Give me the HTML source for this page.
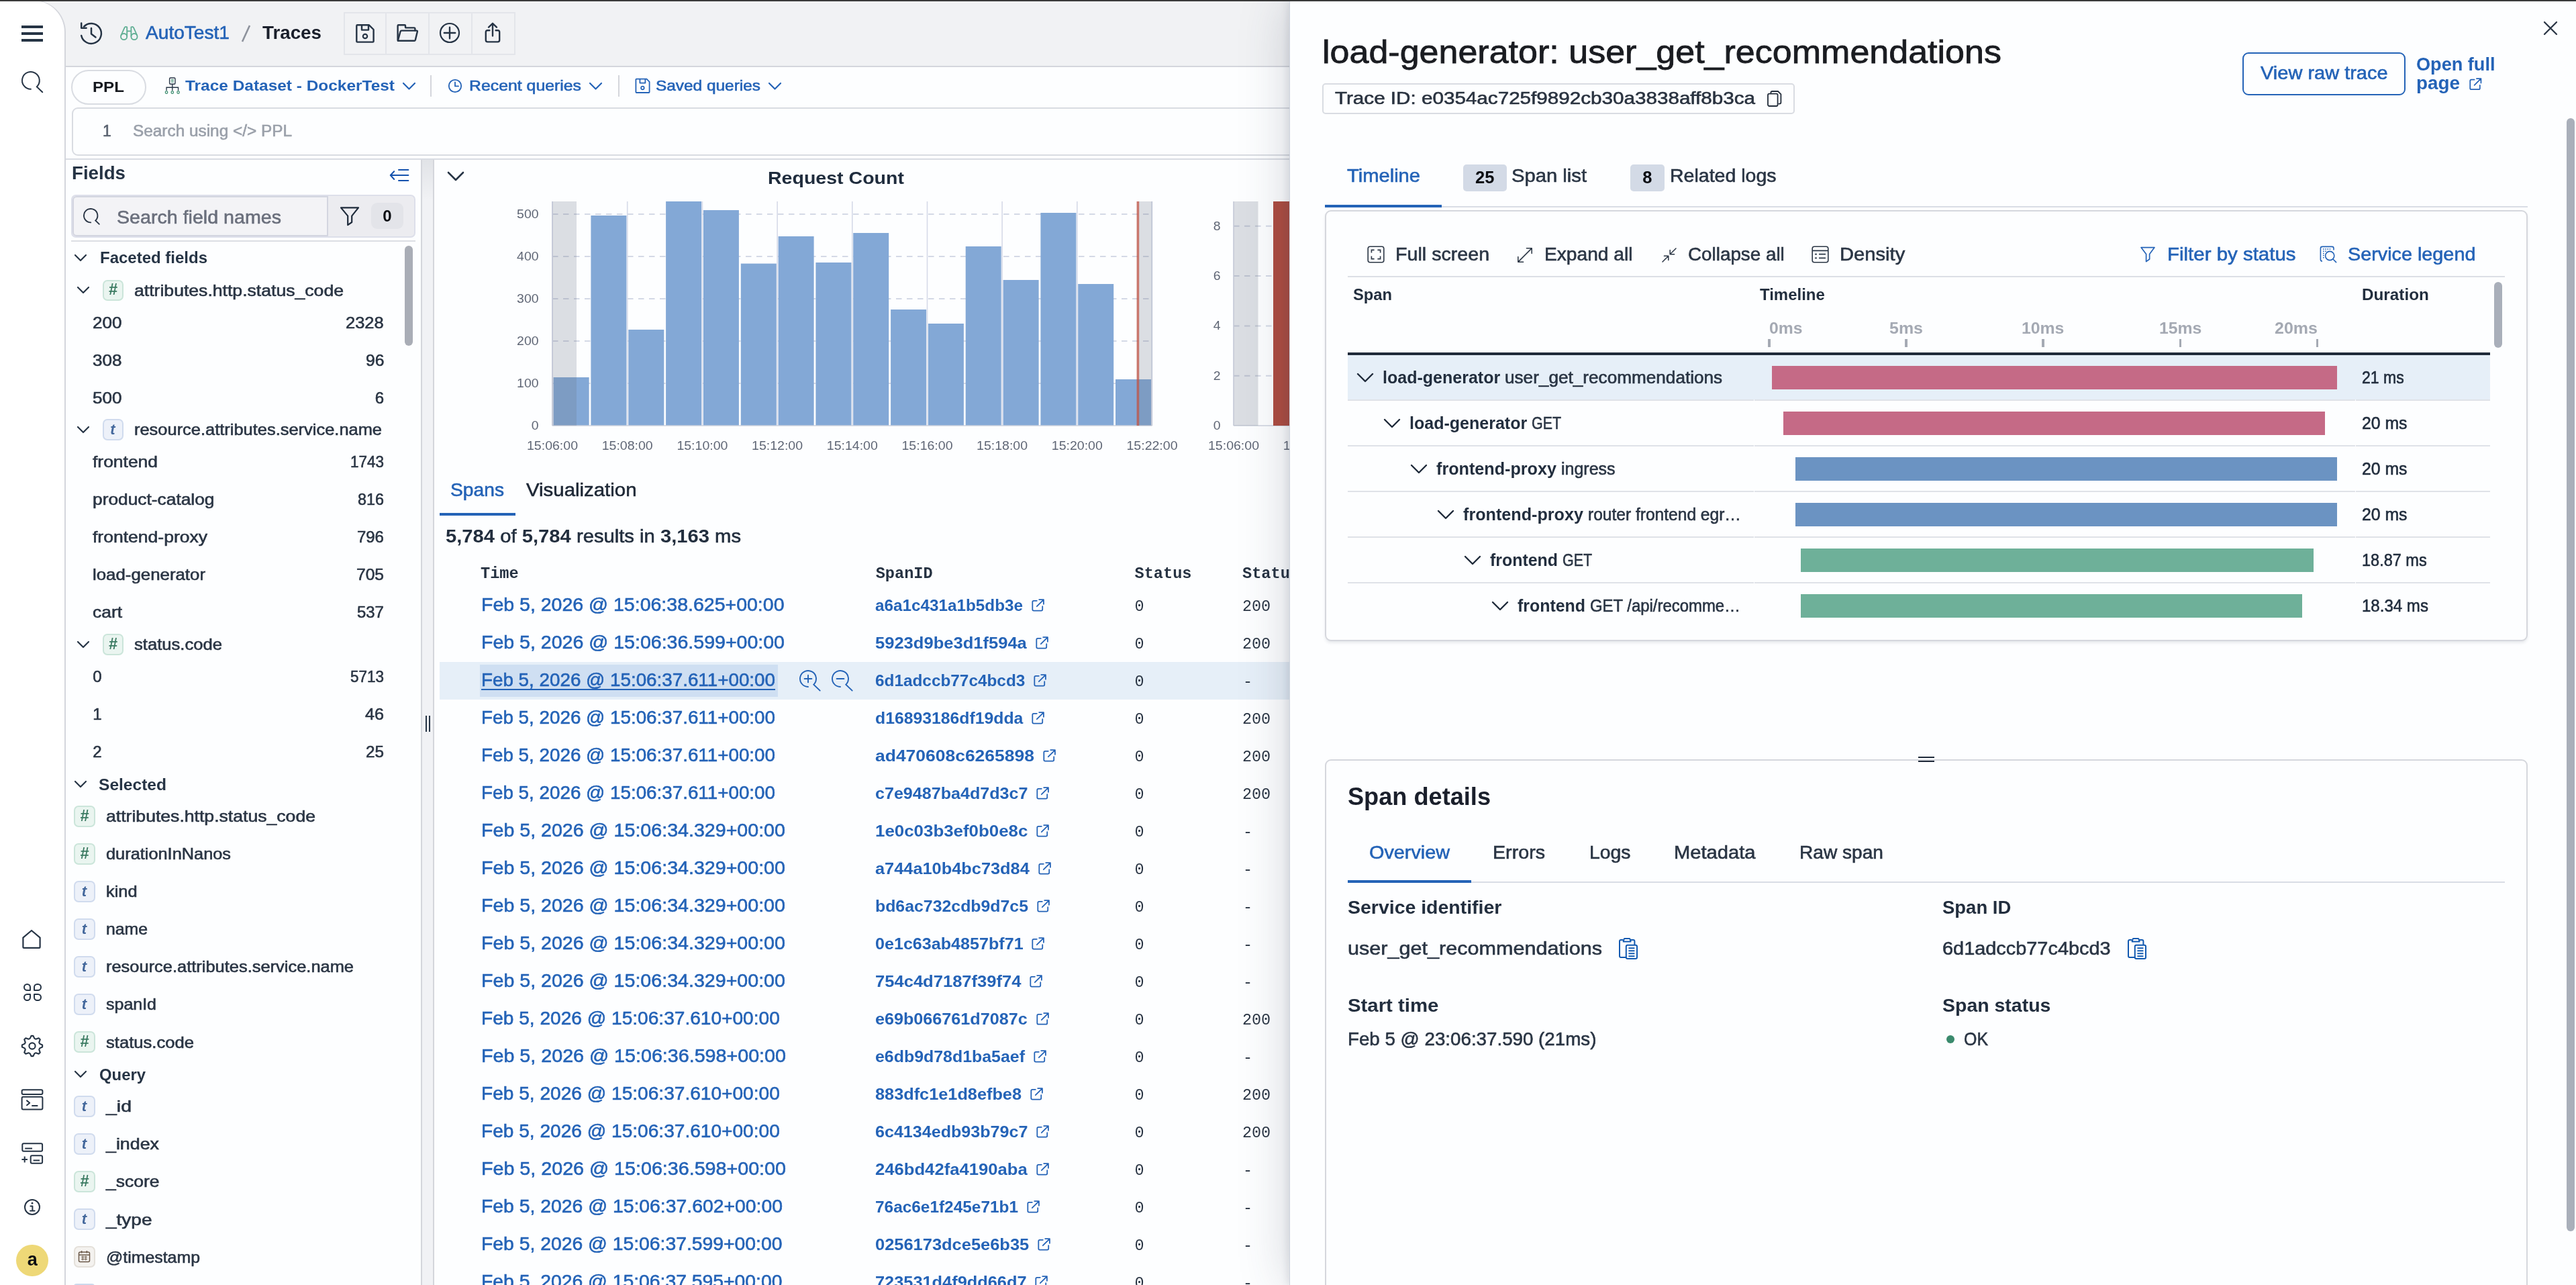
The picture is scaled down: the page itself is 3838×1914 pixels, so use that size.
<!DOCTYPE html>
<html lang="en"><head><meta charset="utf-8"><title>Traces</title><style>
html,body{margin:0;padding:0;}
body{width:3838px;height:1914px;overflow:hidden;position:relative;background:#fdfeff;font-family:"Liberation Sans",sans-serif;}
#app{position:absolute;left:0;top:0;width:3838px;height:1914px;overflow:hidden;will-change:transform;}
.t,.m,.b{position:absolute;}
.t,.m{white-space:nowrap;line-height:1;}
.t{font-family:"Liberation Sans",sans-serif;}
.m{font-family:"Liberation Mono",monospace;}
.r{-webkit-text-stroke:.6px;}
svg{display:block;overflow:visible;}
</style></head>
<body>
<div id="app">
<div class="b" style="left:0px;top:0px;width:3838px;height:1914px;background:#fdfeff;"></div>
<div class="b" style="left:0px;top:0px;width:3838px;height:98px;background:#f1f2f4;"></div>
<div class="b" style="left:96px;top:98px;width:3742px;height:2px;background:#d4d6dc;"></div>
<div class="b" style="left:98px;top:236px;width:3740px;height:2px;background:#d9dce3;"></div>
<div class="b" style="left:0px;top:0px;width:96px;height:1914px;background:#fff;border-right:2px solid #d4d6dc;border-top:1px solid #d4d6dc;border-top-right-radius:48px;"></div>
<div class="b" style="left:0px;top:0px;width:3838px;height:2px;background:#3a3a3a;"></div>
<div class="b" style="left:32px;top:38px;width:32px;height:4px;background:#263445;"></div>
<div class="b" style="left:32px;top:48px;width:32px;height:4px;background:#263445;"></div>
<div class="b" style="left:32px;top:58px;width:32px;height:4px;background:#263445;"></div>
<svg class="b" style="left:30.1px;top:103.9px;" width="47.7" height="47.7" viewBox="0 0 47.7 47.7" fill="none"><path d="M15.90 28.80 A12.90 12.90 0 1 1 24.86 25.18 L33.23 33.23" stroke="#263445" stroke-width="2" stroke-linecap="round" stroke-linejoin="miter"/></svg>
<svg class="b" style="left:116px;top:30px;" width="40" height="40" viewBox="0 0 40 40" fill="none"><path d="M5.2 23 A15 15 0 1 0 9 9.6" stroke="#263445" stroke-width="2.5" stroke-linecap="round"/><path d="M5.2 4.5 V11.8 H12.6" stroke="#263445" stroke-width="2.5" stroke-linecap="round" stroke-linejoin="round"/><path d="M20 12 V20.5 L26.5 25.5" stroke="#263445" stroke-width="2.5" stroke-linecap="round" stroke-linejoin="round"/></svg>
<svg class="b" style="left:178px;top:38px;" width="30" height="24" viewBox="0 0 30 24" fill="none"><circle cx="6.6" cy="16.6" r="4.6" stroke="#5fae93" stroke-width="1.8"/><circle cx="22" cy="16.6" r="4.6" stroke="#5fae93" stroke-width="1.8"/><path d="M2.2 15 L7.6 3.2 Q8.4 1.6 10 2 L11.2 2.4 V16.6" stroke="#5fae93" stroke-width="1.8" stroke-linejoin="round"/><path d="M26.4 15 L21 3.2 Q20.2 1.6 18.6 2 L17.4 2.4 V16.6" stroke="#5fae93" stroke-width="1.8" stroke-linejoin="round"/><path d="M11.2 8.4 H17.4" stroke="#5fae93" stroke-width="1.8"/></svg>
<div class="t r" style="left:217.0px;top:35.3px;font-size:28px;color:#2463b7;transform:scaleX(1.0038);transform-origin:0 0;">AutoTest1</div>
<svg class="b" style="left:356px;top:36px;" width="22" height="28" viewBox="0 0 22 28" fill="none"><path d="M16 2 L5 26" stroke="#8d929c" stroke-width="2.6"/></svg>
<div class="t" style="left:391.0px;top:35.3px;font-size:28px;color:#1a1f2b;font-weight:700;transform:scaleX(0.9916);transform-origin:0 0;">Traces</div>
<div class="b" style="left:512px;top:18px;width:256px;height:64px;border:2px solid #e3e5ea;box-sizing:border-box;"></div>
<div class="b" style="left:574px;top:20px;width:2px;height:60px;background:#e3e5ea;"></div>
<div class="b" style="left:638px;top:20px;width:2px;height:60px;background:#e3e5ea;"></div>
<div class="b" style="left:702px;top:20px;width:2px;height:60px;background:#e3e5ea;"></div>
<svg class="b" style="left:526px;top:32px;" width="36" height="36" viewBox="0 0 36 36" fill="none"><path d="M6.5 5.2 H23.6 L30.6 12 V29.4 Q30.6 30.6 29.4 30.6 H6.5 Q5.3 30.6 5.3 29.4 V6.4 Q5.3 5.2 6.5 5.2 Z" stroke="#263445" stroke-width="2.4" stroke-linejoin="round"/><path d="M13 5.5 V12.6 H23 V5.5" stroke="#263445" stroke-width="2.4" stroke-linejoin="round"/><circle cx="18" cy="22" r="3.2" stroke="#263445" stroke-width="2.2"/></svg>
<svg class="b" style="left:588px;top:32px;" width="38" height="34" viewBox="0 0 38 34" fill="none"><path d="M4.6 27.6 V6.4 Q4.6 5.2 5.8 5.2 H15 Q16 5.2 16 6.2 V8.4 Q16 9.4 17 9.4 H29 Q30.4 9.4 30.4 10.8 V13.4" stroke="#263445" stroke-width="2.4" stroke-linejoin="round" stroke-linecap="round"/><path d="M4.8 28.6 L8.6 14.8 Q9 13.6 10.2 13.6 H32.6 Q34.2 13.6 33.8 15.2 L30.8 27.6 Q30.4 28.8 29.2 28.8 H6 Q4.6 28.8 4.8 28.6 Z" stroke="#263445" stroke-width="2.4" stroke-linejoin="round"/></svg>
<svg class="b" style="left:652px;top:31px;" width="36" height="36" viewBox="0 0 36 36" fill="none"><circle cx="18" cy="18" r="14" stroke="#263445" stroke-width="2.2"/><path d="M18 9.8 V26.2 M9.8 18 H26.2" stroke="#263445" stroke-width="2.4" stroke-linecap="round"/></svg>
<svg class="b" style="left:718px;top:30px;" width="32" height="38" viewBox="0 0 32 38" fill="none"><path d="M11.4 15.2 H8.4 Q5.8 15.2 5.8 17.8 V29.8 Q5.8 32.4 8.4 32.4 H23.6 Q26.2 32.4 26.2 29.8 V17.8 Q26.2 15.2 23.6 15.2 H20.6" stroke="#263445" stroke-width="2.4" stroke-linecap="round"/><path d="M16 23.4 V5.2 M10 10.6 L16 4.8 L22 10.6" stroke="#263445" stroke-width="2.4" stroke-linecap="round" stroke-linejoin="round"/></svg>
<div class="b" style="left:106.4px;top:104.4px;width:111.2px;height:51.3px;border:2px solid #d9dce2;border-radius:26px;box-sizing:border-box;background:#fdfeff;"></div>
<div class="t" style="left:138.4px;top:118.6px;font-size:22.5px;color:#15181e;font-weight:700;transform:scaleX(1.0741);transform-origin:0 0;">PPL</div>
<svg class="b" style="left:245px;top:114.1px;" width="23.6" height="28.2" viewBox="0 0 28 30" preserveAspectRatio="none" fill="none"><rect x="9" y="2" width="10" height="10" rx="1.6" stroke="#263445" stroke-width="1.6"/><path d="M11.6 5.6 H16.4 M11.6 8.4 H16.4" stroke="#3f8f72" stroke-width="1.4"/><path d="M14 12 V22 M3.6 22 V17.4 H24.4 V22" stroke="#263445" stroke-width="1.6"/><circle cx="3.6" cy="25" r="2" stroke="#3f8f72" stroke-width="1.5"/><circle cx="14" cy="25" r="2" stroke="#3f8f72" stroke-width="1.5"/><circle cx="24.4" cy="25" r="2" stroke="#3f8f72" stroke-width="1.5"/></svg>
<div class="t" style="left:276.0px;top:117.0px;font-size:22.5px;color:#2463b7;font-weight:700;transform:scaleX(1.0863);transform-origin:0 0;">Trace Dataset - DockerTest</div>
<svg class="b" style="left:598.5px;top:121.75px;" width="21" height="12.5" viewBox="0 0 21 12.5" fill="none"><path d="M2 2 L10.5 10.5 L19 2" stroke="#2463b7" stroke-width="2.2" stroke-linecap="round" stroke-linejoin="round"/></svg>
<div class="b" style="left:641px;top:112px;width:2px;height:32px;background:#d4d6dc;"></div>
<svg class="b" style="left:666px;top:116px;" width="24" height="24" viewBox="0 0 24 24" fill="none"><circle cx="12" cy="12" r="9.2" stroke="#2463b7" stroke-width="1.8"/><path d="M12 6.4 V12.4 H17" stroke="#2463b7" stroke-width="1.8" stroke-linecap="round" stroke-linejoin="round"/></svg>
<div class="t r" style="left:699.0px;top:117.0px;font-size:22.5px;color:#2463b7;transform:scaleX(1.1035);transform-origin:0 0;">Recent queries</div>
<svg class="b" style="left:877px;top:121.75px;" width="21" height="12.5" viewBox="0 0 21 12.5" fill="none"><path d="M2 2 L10.5 10.5 L19 2" stroke="#2463b7" stroke-width="2.2" stroke-linecap="round" stroke-linejoin="round"/></svg>
<div class="b" style="left:921px;top:112px;width:2px;height:32px;background:#d4d6dc;"></div>
<svg class="b" style="left:945px;top:115px;" width="26" height="26" viewBox="0 0 26 26" fill="none"><path d="M3.4 2.6 H18.4 L22.6 6.8 V22 Q22.6 23 21.6 23 H3.4 Q2.4 23 2.4 22 V3.6 Q2.4 2.6 3.4 2.6 Z" stroke="#2463b7" stroke-width="1.8" stroke-linejoin="round"/><path d="M8.4 3 V8.6 H16.4 V3" stroke="#2463b7" stroke-width="1.8" stroke-linejoin="round"/><circle cx="12.4" cy="16" r="2.3" stroke="#2463b7" stroke-width="1.7"/></svg>
<div class="t r" style="left:977.0px;top:117.0px;font-size:22.5px;color:#2463b7;transform:scaleX(1.0845);transform-origin:0 0;">Saved queries</div>
<svg class="b" style="left:1144px;top:121.75px;" width="21" height="12.5" viewBox="0 0 21 12.5" fill="none"><path d="M2 2 L10.5 10.5 L19 2" stroke="#2463b7" stroke-width="2.2" stroke-linecap="round" stroke-linejoin="round"/></svg>
<div class="b" style="left:107px;top:160px;width:3000px;height:72px;border:2px solid #d9dce2;border-radius:9px;box-sizing:border-box;background:#fdfeff;"></div>
<div class="t r" style="left:153.0px;top:183.5px;font-size:23px;color:#59616f;">1</div>
<div class="t r" style="left:198.0px;top:183.5px;font-size:23px;color:#9aa0aa;transform:scaleX(1.0592);transform-origin:0 0;">Search using &lt;/&gt; PPL</div>
<div class="b" style="left:627px;top:238px;width:2px;height:1676px;background:#d4d6dc;"></div>
<div class="b" style="left:629px;top:238px;width:16px;height:1676px;background:linear-gradient(#e1e3e7,#f1f2f5 60px);"></div>
<div class="b" style="left:645px;top:238px;width:2px;height:1676px;background:#d4d6dc;"></div>
<div class="b" style="left:634px;top:1066px;width:2px;height:24px;background:#263445;"></div>
<div class="b" style="left:639px;top:1066px;width:2px;height:24px;background:#263445;"></div>
<div class="t" style="left:107.0px;top:244.3px;font-size:28px;color:#263445;font-weight:700;transform:scaleX(0.9887);transform-origin:0 0;">Fields</div>
<svg class="b" style="left:578px;top:248px;" width="34" height="26" viewBox="0 0 34 26" fill="none"><path d="M16 4.9 H30.4 M4 13 H30.4 M16 21 H30.4" stroke="#1452ad" stroke-width="2" stroke-linecap="round"/><path d="M9.2 7.2 L3.8 13 L9.2 19" stroke="#1452ad" stroke-width="2" stroke-linecap="round" stroke-linejoin="round"/></svg>
<div class="b" style="left:106px;top:290px;width:513px;height:64px;background:#ececf0;border:2px solid #dddfea;border-radius:7px;box-sizing:border-box;"></div>
<div class="b" style="left:108px;top:292px;width:381px;height:60px;background:#f3f3f6;border:2px solid #d3d5e0;border-right:2px solid #d3d5e0;border-radius:6px 0 0 6px;box-sizing:border-box;"></div>
<svg class="b" style="left:122.2px;top:307.8px;" width="39.6" height="39.6" viewBox="0 0 39.6 39.6" fill="none"><path d="M13.20 23.40 A10.20 10.20 0 1 1 20.29 20.54 L25.82 25.82" stroke="#2b3646" stroke-width="1.9" stroke-linecap="round" stroke-linejoin="miter"/></svg>
<div class="t r" style="left:174.0px;top:310.3px;font-size:28px;color:#6a6f7c;transform:scaleX(1.0222);transform-origin:0 0;">Search field names</div>
<svg class="b" style="left:504px;top:305px;" width="34" height="34" viewBox="0 0 34 34" fill="none"><path d="M4 4.4 H30 L20.2 16.6 V26 L14.2 30.2 V16.6 Z" stroke="#1f2b3b" stroke-width="2.2" stroke-linejoin="round"/></svg>
<div class="b" style="left:553px;top:302px;width:48px;height:39px;background:#e3e4e9;border-radius:9px;"></div>
<div class="t" style="left:570.3px;top:310.2px;font-size:24px;color:#0b0d12;font-weight:700;">0</div>
<div class="b" style="left:106px;top:358px;width:513px;height:2px;background:#dcdee4;"></div>
<div class="b" style="left:603px;top:366px;width:12px;height:149px;background:#a9adb6;border-radius:6px;"></div>
<svg class="b" style="left:110px;top:378px;" width="20" height="12" viewBox="0 0 20 12" fill="none"><path d="M2 2 L10 10 L18 2" stroke="#263445" stroke-width="2.2" stroke-linecap="round" stroke-linejoin="round"/></svg>
<div class="t" style="left:148.6px;top:372.3px;font-size:24px;color:#263445;font-weight:700;transform:scaleX(0.9997);transform-origin:0 0;">Faceted fields</div>
<svg class="b" style="left:113.6px;top:426px;" width="20" height="12" viewBox="0 0 20 12" fill="none"><path d="M2 2 L10 10 L18 2" stroke="#263445" stroke-width="2.2" stroke-linecap="round" stroke-linejoin="round"/></svg>
<div class="b" style="left:152.5px;top:416.5px;width:31.5px;height:31.5px;background:#eaf5f0;border:2px solid #cbe5da;border-radius:7px;box-sizing:border-box;"></div>
<div class="t" style="left:161.8px;top:420.3px;font-size:23.5px;color:#3a7a61;font-weight:700;font-style:italic;">#</div>
<div class="t r" style="left:200.3px;top:420.5px;font-size:24px;color:#2a3544;transform:scaleX(1.1083);transform-origin:0 0;">attributes.http.status_code</div>
<div class="t r" style="left:138.3px;top:468.9px;font-size:24px;color:#2a3544;transform:scaleX(1.0863);transform-origin:0 0;">200</div>
<div class="t r" style="left:515.3px;top:468.9px;font-size:24px;color:#2a3544;transform:scaleX(1.0620);transform-origin:0 0;">2328</div>
<div class="t r" style="left:138.3px;top:524.9px;font-size:24px;color:#2a3544;transform:scaleX(1.0863);transform-origin:0 0;">308</div>
<div class="t r" style="left:544.6px;top:524.9px;font-size:24px;color:#2a3544;transform:scaleX(1.0264);transform-origin:0 0;">96</div>
<div class="t r" style="left:138.3px;top:580.9px;font-size:24px;color:#2a3544;transform:scaleX(1.0863);transform-origin:0 0;">500</div>
<div class="t r" style="left:558.7px;top:580.9px;font-size:24px;color:#2a3544;">6</div>
<svg class="b" style="left:113.6px;top:633.5px;" width="20" height="12" viewBox="0 0 20 12" fill="none"><path d="M2 2 L10 10 L18 2" stroke="#263445" stroke-width="2.2" stroke-linecap="round" stroke-linejoin="round"/></svg>
<div class="b" style="left:152.5px;top:624px;width:31.5px;height:31.5px;background:#edf1f9;border:2px solid #d0dbee;border-radius:7px;box-sizing:border-box;"></div>
<div class="t" style="left:164.3px;top:628.5px;font-size:22px;color:#44689c;font-weight:700;font-style:italic;">t</div>
<div class="t r" style="left:200.3px;top:628.0px;font-size:24px;color:#2a3544;transform:scaleX(1.0599);transform-origin:0 0;">resource.attributes.service.name</div>
<div class="t r" style="left:138.3px;top:675.9px;font-size:24px;color:#2a3544;transform:scaleX(1.1014);transform-origin:0 0;">frontend</div>
<div class="t r" style="left:522.0px;top:675.9px;font-size:24px;color:#2a3544;transform:scaleX(0.9365);transform-origin:0 0;">1743</div>
<div class="t r" style="left:138.3px;top:731.9px;font-size:24px;color:#2a3544;transform:scaleX(1.0971);transform-origin:0 0;">product-catalog</div>
<div class="t r" style="left:533.0px;top:731.9px;font-size:24px;color:#2a3544;transform:scaleX(0.9739);transform-origin:0 0;">816</div>
<div class="t r" style="left:138.3px;top:788.4px;font-size:24px;color:#2a3544;transform:scaleX(1.1050);transform-origin:0 0;">frontend-proxy</div>
<div class="t r" style="left:532.1px;top:788.4px;font-size:24px;color:#2a3544;transform:scaleX(0.9964);transform-origin:0 0;">796</div>
<div class="t r" style="left:138.3px;top:844.4px;font-size:24px;color:#2a3544;transform:scaleX(1.0762);transform-origin:0 0;">load-generator</div>
<div class="t r" style="left:531.0px;top:844.4px;font-size:24px;color:#2a3544;transform:scaleX(1.0239);transform-origin:0 0;">705</div>
<div class="t r" style="left:138.3px;top:900.4px;font-size:24px;color:#2a3544;transform:scaleX(1.0998);transform-origin:0 0;">cart</div>
<div class="t r" style="left:532.1px;top:900.4px;font-size:24px;color:#2a3544;transform:scaleX(0.9964);transform-origin:0 0;">537</div>
<svg class="b" style="left:113.6px;top:953.5px;" width="20" height="12" viewBox="0 0 20 12" fill="none"><path d="M2 2 L10 10 L18 2" stroke="#263445" stroke-width="2.2" stroke-linecap="round" stroke-linejoin="round"/></svg>
<div class="b" style="left:152.5px;top:944px;width:31.5px;height:31.5px;background:#eaf5f0;border:2px solid #cbe5da;border-radius:7px;box-sizing:border-box;"></div>
<div class="t" style="left:161.8px;top:947.8px;font-size:23.5px;color:#3a7a61;font-weight:700;font-style:italic;">#</div>
<div class="t r" style="left:200.3px;top:948.0px;font-size:24px;color:#2a3544;transform:scaleX(1.0673);transform-origin:0 0;">status.code</div>
<div class="t r" style="left:138.3px;top:996.4px;font-size:24px;color:#2a3544;">0</div>
<div class="t r" style="left:522.0px;top:996.4px;font-size:24px;color:#2a3544;transform:scaleX(0.9365);transform-origin:0 0;">5713</div>
<div class="t r" style="left:138.3px;top:1052.4px;font-size:24px;color:#2a3544;">1</div>
<div class="t r" style="left:544.0px;top:1052.4px;font-size:24px;color:#2a3544;transform:scaleX(1.0489);transform-origin:0 0;">46</div>
<div class="t r" style="left:138.3px;top:1108.4px;font-size:24px;color:#2a3544;">2</div>
<div class="t r" style="left:545.0px;top:1108.4px;font-size:24px;color:#2a3544;transform:scaleX(1.0114);transform-origin:0 0;">25</div>
<svg class="b" style="left:110px;top:1162px;" width="20" height="12" viewBox="0 0 20 12" fill="none"><path d="M2 2 L10 10 L18 2" stroke="#263445" stroke-width="2.2" stroke-linecap="round" stroke-linejoin="round"/></svg>
<div class="t" style="left:147.4px;top:1156.5px;font-size:24px;color:#263445;font-weight:700;transform:scaleX(1.0231);transform-origin:0 0;">Selected</div>
<div class="b" style="left:110px;top:1200px;width:31.5px;height:31.5px;background:#eaf5f0;border:2px solid #cbe5da;border-radius:7px;box-sizing:border-box;"></div>
<div class="t" style="left:119.3px;top:1203.8px;font-size:23.5px;color:#3a7a61;font-weight:700;font-style:italic;">#</div>
<div class="t r" style="left:158.0px;top:1204.2px;font-size:24px;color:#2a3544;transform:scaleX(1.1083);transform-origin:0 0;">attributes.http.status_code</div>
<div class="b" style="left:110px;top:1256.05px;width:31.5px;height:31.5px;background:#eaf5f0;border:2px solid #cbe5da;border-radius:7px;box-sizing:border-box;"></div>
<div class="t" style="left:119.3px;top:1259.9px;font-size:23.5px;color:#3a7a61;font-weight:700;font-style:italic;">#</div>
<div class="t r" style="left:158.0px;top:1260.2px;font-size:24px;color:#2a3544;transform:scaleX(1.0561);transform-origin:0 0;">durationInNanos</div>
<div class="b" style="left:110px;top:1312.1px;width:31.5px;height:31.5px;background:#edf1f9;border:2px solid #d0dbee;border-radius:7px;box-sizing:border-box;"></div>
<div class="t" style="left:121.8px;top:1316.6px;font-size:22px;color:#44689c;font-weight:700;font-style:italic;">t</div>
<div class="t r" style="left:158.0px;top:1316.3px;font-size:24px;color:#2a3544;transform:scaleX(1.0562);transform-origin:0 0;">kind</div>
<div class="b" style="left:110px;top:1368.15px;width:31.5px;height:31.5px;background:#edf1f9;border:2px solid #d0dbee;border-radius:7px;box-sizing:border-box;"></div>
<div class="t" style="left:121.8px;top:1372.6px;font-size:22px;color:#44689c;font-weight:700;font-style:italic;">t</div>
<div class="t r" style="left:158.0px;top:1372.3px;font-size:24px;color:#2a3544;transform:scaleX(1.0327);transform-origin:0 0;">name</div>
<div class="b" style="left:110px;top:1424.2px;width:31.5px;height:31.5px;background:#edf1f9;border:2px solid #d0dbee;border-radius:7px;box-sizing:border-box;"></div>
<div class="t" style="left:121.8px;top:1428.7px;font-size:22px;color:#44689c;font-weight:700;font-style:italic;">t</div>
<div class="t r" style="left:158.0px;top:1428.4px;font-size:24px;color:#2a3544;transform:scaleX(1.0599);transform-origin:0 0;">resource.attributes.service.name</div>
<div class="b" style="left:110px;top:1480.25px;width:31.5px;height:31.5px;background:#edf1f9;border:2px solid #d0dbee;border-radius:7px;box-sizing:border-box;"></div>
<div class="t" style="left:121.8px;top:1484.7px;font-size:22px;color:#44689c;font-weight:700;font-style:italic;">t</div>
<div class="t r" style="left:158.0px;top:1484.4px;font-size:24px;color:#2a3544;transform:scaleX(1.0408);transform-origin:0 0;">spanId</div>
<div class="b" style="left:110px;top:1536.3px;width:31.5px;height:31.5px;background:#eaf5f0;border:2px solid #cbe5da;border-radius:7px;box-sizing:border-box;"></div>
<div class="t" style="left:119.3px;top:1540.1px;font-size:23.5px;color:#3a7a61;font-weight:700;font-style:italic;">#</div>
<div class="t r" style="left:158.0px;top:1540.5px;font-size:24px;color:#2a3544;transform:scaleX(1.0673);transform-origin:0 0;">status.code</div>
<svg class="b" style="left:110px;top:1594px;" width="20" height="12" viewBox="0 0 20 12" fill="none"><path d="M2 2 L10 10 L18 2" stroke="#263445" stroke-width="2.2" stroke-linecap="round" stroke-linejoin="round"/></svg>
<div class="t" style="left:147.6px;top:1588.5px;font-size:24px;color:#263445;font-weight:700;transform:scaleX(0.9948);transform-origin:0 0;">Query</div>
<div class="b" style="left:110px;top:1632px;width:31.5px;height:31.5px;background:#edf1f9;border:2px solid #d0dbee;border-radius:7px;box-sizing:border-box;"></div>
<div class="t" style="left:121.8px;top:1636.5px;font-size:22px;color:#44689c;font-weight:700;font-style:italic;">t</div>
<div class="t r" style="left:158.0px;top:1636.2px;font-size:24px;color:#2a3544;transform:scaleX(1.1865);transform-origin:0 0;">_id</div>
<div class="b" style="left:110px;top:1688.1px;width:31.5px;height:31.5px;background:#edf1f9;border:2px solid #d0dbee;border-radius:7px;box-sizing:border-box;"></div>
<div class="t" style="left:121.8px;top:1692.6px;font-size:22px;color:#44689c;font-weight:700;font-style:italic;">t</div>
<div class="t r" style="left:158.0px;top:1692.3px;font-size:24px;color:#2a3544;transform:scaleX(1.1170);transform-origin:0 0;">_index</div>
<div class="b" style="left:110px;top:1744.2px;width:31.5px;height:31.5px;background:#eaf5f0;border:2px solid #cbe5da;border-radius:7px;box-sizing:border-box;"></div>
<div class="t" style="left:119.3px;top:1748.0px;font-size:23.5px;color:#3a7a61;font-weight:700;font-style:italic;">#</div>
<div class="t r" style="left:158.0px;top:1748.4px;font-size:24px;color:#2a3544;transform:scaleX(1.1036);transform-origin:0 0;">_score</div>
<div class="b" style="left:110px;top:1800.3px;width:31.5px;height:31.5px;background:#edf1f9;border:2px solid #d0dbee;border-radius:7px;box-sizing:border-box;"></div>
<div class="t" style="left:121.8px;top:1804.8px;font-size:22px;color:#44689c;font-weight:700;font-style:italic;">t</div>
<div class="t r" style="left:158.0px;top:1804.5px;font-size:24px;color:#2a3544;transform:scaleX(1.1667);transform-origin:0 0;">_type</div>
<div class="b" style="left:110px;top:1856.4px;width:31.5px;height:31.5px;background:#f4f2ef;border:2px solid #e4e0da;border-radius:7px;box-sizing:border-box;"></div>
<svg class="b" style="left:116px;top:1862.4px;" width="19" height="19" viewBox="0 0 19 19" fill="none"><rect x="1.5" y="3" width="16" height="14.5" rx="2" stroke="#6b5a4a" stroke-width="1.5"/><path d="M1.5 7.2 H17.5 M5.6 1 V4.4 M13.4 1 V4.4" stroke="#6b5a4a" stroke-width="1.5"/><path d="M5 10.2 H14 M5 13.4 H14 M7.2 8.6 V15.4 M11.8 8.6 V15.4" stroke="#6b5a4a" stroke-width="1"/></svg>
<div class="t r" style="left:158.0px;top:1860.6px;font-size:24px;color:#2a3544;transform:scaleX(1.0366);transform-origin:0 0;">@timestamp</div>
<div class="b" style="left:110px;top:1912px;width:31px;height:4px;background:#e9eff8;border:2px solid #cbd8ec;border-radius:7px 7px 0 0;box-sizing:border-box;"></div>
<svg class="b" style="left:30px;top:1382px;" width="34" height="34" viewBox="0 0 34 34" fill="none"><path d="M4.4 14.6 L17 4 L29.6 14.6 V28.4 Q29.6 29.8 28.2 29.8 H5.8 Q4.4 29.8 4.4 28.4 Z" stroke="#263445" stroke-width="2.2" stroke-linejoin="round"/></svg>
<div class="b" style="left:34.5px;top:1464.5px;width:11.6px;height:11.6px;border:2px solid #263445;border-radius:50% 50% 12% 50%;box-sizing:border-box;"></div>
<div class="b" style="left:50.4px;top:1464.5px;width:11.6px;height:11.6px;border:2px solid #263445;border-radius:50% 50% 50% 12%;box-sizing:border-box;"></div>
<div class="b" style="left:34.5px;top:1479.6px;width:11.6px;height:11.6px;border:2px solid #263445;border-radius:50% 12% 50% 50%;box-sizing:border-box;"></div>
<div class="b" style="left:50.4px;top:1479.6px;width:11.6px;height:11.6px;border:2px solid #263445;border-radius:12% 50% 50% 50%;box-sizing:border-box;"></div>
<svg class="b" style="left:31px;top:1541px;" width="34" height="34" viewBox="0 0 34 34" fill="none"><path d="M15.51 1.87 L18.49 1.87 L20.37 5.90 L22.47 6.77 L26.64 5.25 L28.75 7.36 L27.23 11.53 L28.10 13.63 L32.13 15.51 L32.13 18.49 L28.10 20.37 L27.23 22.47 L28.75 26.64 L26.64 28.75 L22.47 27.23 L20.37 28.10 L18.49 32.13 L15.51 32.13 L13.63 28.10 L11.53 27.23 L7.36 28.75 L5.25 26.64 L6.77 22.47 L5.90 20.37 L1.87 18.49 L1.87 15.51 L5.90 13.63 L6.77 11.53 L5.25 7.36 L7.36 5.25 L11.53 6.77 L13.63 5.90 Z" stroke="#263445" stroke-width="2.1" stroke-linejoin="round"/><circle cx="17" cy="17" r="4.6" stroke="#263445" stroke-width="2.1"/></svg>
<svg class="b" style="left:30px;top:1621px;" width="36" height="34" viewBox="0 0 36 34" fill="none"><rect x="2.6" y="2.2" width="30.8" height="6.8" rx="2" stroke="#263445" stroke-width="2"/><rect x="2.6" y="12.8" width="30.8" height="18.8" rx="2" stroke="#263445" stroke-width="2"/><path d="M10 18.4 L14.2 21.8 L10 25.2 M18 26 H25.6" stroke="#263445" stroke-width="2" stroke-linecap="round" stroke-linejoin="round"/></svg>
<svg class="b" style="left:30px;top:1700px;" width="36" height="36" viewBox="0 0 36 36" fill="none"><rect x="3.3" y="3.3" width="29.8" height="11.4" rx="2" stroke="#263445" stroke-width="2"/><path d="M7.2 10.6 H18" stroke="#263445" stroke-width="2"/><rect x="15.7" y="21.3" width="17.4" height="11.4" rx="2" stroke="#263445" stroke-width="2"/><path d="M19.6 28.4 H29" stroke="#263445" stroke-width="2"/><path d="M2.4 27 H11 M6.7 22.6 V31.4" stroke="#263445" stroke-width="2"/></svg>
<svg class="b" style="left:34px;top:1784px;" width="28" height="28" viewBox="0 0 28 28" fill="none"><circle cx="14" cy="14" r="11" stroke="#263445" stroke-width="2"/><path d="M11.4 12.4 H14.4 V19.4 M11 19.6 H17.6" stroke="#263445" stroke-width="2" stroke-linecap="round" stroke-linejoin="round"/><circle cx="14" cy="8.2" r="1.4" fill="#263445"/></svg>
<div class="b" style="left:24.2px;top:1853.8px;width:47.7px;height:47.7px;background:#eed877;border-radius:50%;"></div>
<div class="t" style="left:40.7px;top:1862.6px;font-size:27px;color:#0b0d12;font-weight:700;">a</div>
<svg class="b" style="left:666px;top:254.5px;" width="26" height="15" viewBox="0 0 26 15" fill="none"><path d="M2 2 L13 13 L24 2" stroke="#263445" stroke-width="2.6" stroke-linecap="round" stroke-linejoin="round"/></svg>
<div class="t" style="left:1143.8px;top:251.8px;font-size:26px;color:#1f2c3d;font-weight:700;transform:scaleX(1.0980);transform-origin:0 0;">Request Count</div>
<svg class="b" style="left:0;top:0;font-family:'Liberation Sans',sans-serif;" width="2000" height="700" viewBox="0 0 2000 700"><path d="M823.0 318.9 H1716.5" stroke="#d4d9e6" stroke-width="2" stroke-dasharray="8.5 7.5"/><path d="M823.0 381.9 H1716.5" stroke="#d4d9e6" stroke-width="2" stroke-dasharray="8.5 7.5"/><path d="M823.0 444.9 H1716.5" stroke="#d4d9e6" stroke-width="2" stroke-dasharray="8.5 7.5"/><path d="M823.0 507.9 H1716.5" stroke="#d4d9e6" stroke-width="2" stroke-dasharray="8.5 7.5"/><path d="M823.0 570.9 H1716.5" stroke="#d4d9e6" stroke-width="2" stroke-dasharray="8.5 7.5"/><path d="M823.0 300.0 V634.0" stroke="#d6dae8" stroke-width="1.6"/><path d="M934.7 300.0 V634.0" stroke="#d6dae8" stroke-width="1.6"/><path d="M1046.4 300.0 V634.0" stroke="#d6dae8" stroke-width="1.6"/><path d="M1158.1 300.0 V634.0" stroke="#d6dae8" stroke-width="1.6"/><path d="M1269.8 300.0 V634.0" stroke="#d6dae8" stroke-width="1.6"/><path d="M1381.5 300.0 V634.0" stroke="#d6dae8" stroke-width="1.6"/><path d="M1493.1 300.0 V634.0" stroke="#d6dae8" stroke-width="1.6"/><path d="M1604.8 300.0 V634.0" stroke="#d6dae8" stroke-width="1.6"/><path d="M1716.5 300.0 V634.0" stroke="#d6dae8" stroke-width="1.6"/><rect x="824.6" y="562.0" width="53" height="72.0" fill="#83a8d6"/><rect x="880.4" y="321.0" width="53" height="313.0" fill="#83a8d6"/><rect x="936.3" y="491.0" width="53" height="143.0" fill="#83a8d6"/><rect x="992.1" y="300.0" width="53" height="334.0" fill="#83a8d6"/><rect x="1047.9" y="313.0" width="53" height="321.0" fill="#83a8d6"/><rect x="1103.8" y="392.6" width="53" height="241.4" fill="#83a8d6"/><rect x="1159.6" y="352.0" width="53" height="282.0" fill="#83a8d6"/><rect x="1215.4" y="391.0" width="53" height="243.0" fill="#83a8d6"/><rect x="1271.2" y="347.0" width="53" height="287.0" fill="#83a8d6"/><rect x="1327.1" y="461.0" width="53" height="173.0" fill="#83a8d6"/><rect x="1382.9" y="482.0" width="53" height="152.0" fill="#83a8d6"/><rect x="1438.7" y="367.0" width="53" height="267.0" fill="#83a8d6"/><rect x="1494.6" y="417.0" width="53" height="217.0" fill="#83a8d6"/><rect x="1550.4" y="317.0" width="53" height="317.0" fill="#83a8d6"/><rect x="1606.2" y="423.0" width="53" height="211.0" fill="#83a8d6"/><rect x="1662.0" y="565.0" width="53" height="69.0" fill="#83a8d6"/><path d="M823.0 634.0 H1716.5" stroke="#cdd2de" stroke-width="1.6"/><rect x="823" y="300" width="36" height="334" fill="#6c7686" fill-opacity="0.23"/><rect x="1697" y="300" width="19.5" height="334" fill="#6c7686" fill-opacity="0.23"/><path d="M823 300 V634 M1716 300 V634" stroke="#c4c9d6" stroke-width="1.6"/><rect x="1693.6" y="300" width="3.6" height="334" fill="#bd5548" fill-opacity="0.8"/><text x="802.5" y="324.8" text-anchor="end" font-size="18.5" fill="#5f6675" textLength="32.4" lengthAdjust="spacingAndGlyphs">500</text><text x="802.5" y="387.8" text-anchor="end" font-size="18.5" fill="#5f6675" textLength="32.4" lengthAdjust="spacingAndGlyphs">400</text><text x="802.5" y="450.8" text-anchor="end" font-size="18.5" fill="#5f6675" textLength="32.4" lengthAdjust="spacingAndGlyphs">300</text><text x="802.5" y="513.8" text-anchor="end" font-size="18.5" fill="#5f6675" textLength="32.4" lengthAdjust="spacingAndGlyphs">200</text><text x="802.5" y="576.8" text-anchor="end" font-size="18.5" fill="#5f6675" textLength="32.4" lengthAdjust="spacingAndGlyphs">100</text><text x="802.5" y="639.8" text-anchor="end" font-size="18.5" fill="#5f6675" textLength="10.8" lengthAdjust="spacingAndGlyphs">0</text><text x="823.0" y="669.6" text-anchor="middle" font-size="18.5" fill="#5f6675" textLength="76" lengthAdjust="spacingAndGlyphs">15:06:00</text><text x="934.7" y="669.6" text-anchor="middle" font-size="18.5" fill="#5f6675" textLength="76" lengthAdjust="spacingAndGlyphs">15:08:00</text><text x="1046.4" y="669.6" text-anchor="middle" font-size="18.5" fill="#5f6675" textLength="76" lengthAdjust="spacingAndGlyphs">15:10:00</text><text x="1158.1" y="669.6" text-anchor="middle" font-size="18.5" fill="#5f6675" textLength="76" lengthAdjust="spacingAndGlyphs">15:12:00</text><text x="1269.8" y="669.6" text-anchor="middle" font-size="18.5" fill="#5f6675" textLength="76" lengthAdjust="spacingAndGlyphs">15:14:00</text><text x="1381.5" y="669.6" text-anchor="middle" font-size="18.5" fill="#5f6675" textLength="76" lengthAdjust="spacingAndGlyphs">15:16:00</text><text x="1493.1" y="669.6" text-anchor="middle" font-size="18.5" fill="#5f6675" textLength="76" lengthAdjust="spacingAndGlyphs">15:18:00</text><text x="1604.8" y="669.6" text-anchor="middle" font-size="18.5" fill="#5f6675" textLength="76" lengthAdjust="spacingAndGlyphs">15:20:00</text><text x="1716.5" y="669.6" text-anchor="middle" font-size="18.5" fill="#5f6675" textLength="76" lengthAdjust="spacingAndGlyphs">15:22:00</text><path d="M1838 336.8 H1930" stroke="#d4d9e6" stroke-width="2" stroke-dasharray="8.5 7.5"/><path d="M1838 411.1 H1930" stroke="#d4d9e6" stroke-width="2" stroke-dasharray="8.5 7.5"/><path d="M1838 485.4 H1930" stroke="#d4d9e6" stroke-width="2" stroke-dasharray="8.5 7.5"/><path d="M1838 559.7 H1930" stroke="#d4d9e6" stroke-width="2" stroke-dasharray="8.5 7.5"/><text x="1818.5" y="342.7" text-anchor="end" font-size="18.5" fill="#5f6675" textLength="10.8" lengthAdjust="spacingAndGlyphs">8</text><text x="1818.5" y="417.0" text-anchor="end" font-size="18.5" fill="#5f6675" textLength="10.8" lengthAdjust="spacingAndGlyphs">6</text><text x="1818.5" y="491.3" text-anchor="end" font-size="18.5" fill="#5f6675" textLength="10.8" lengthAdjust="spacingAndGlyphs">4</text><text x="1818.5" y="565.6" text-anchor="end" font-size="18.5" fill="#5f6675" textLength="10.8" lengthAdjust="spacingAndGlyphs">2</text><text x="1818.5" y="639.9" text-anchor="end" font-size="18.5" fill="#5f6675" textLength="10.8" lengthAdjust="spacingAndGlyphs">0</text><path d="M1838 634 H1930" stroke="#cdd2de" stroke-width="1.6"/><rect x="1838" y="300" width="36.5" height="334" fill="#6c7686" fill-opacity="0.23"/><path d="M1838 300 V634" stroke="#c4c9d6" stroke-width="1.6"/><rect x="1897" y="300" width="40" height="334" fill="#ae4c40"/><text x="1838" y="669.6" text-anchor="middle" font-size="18.5" fill="#5f6675" textLength="76" lengthAdjust="spacingAndGlyphs">15:06:00</text><text x="1949.7" y="669.6" text-anchor="middle" font-size="18.5" fill="#5f6675" textLength="76" lengthAdjust="spacingAndGlyphs">15:08:00</text></svg>
<div class="t r" style="left:671.0px;top:716.3px;font-size:28px;color:#2463b7;transform:scaleX(1.0076);transform-origin:0 0;">Spans</div>
<div class="t r" style="left:784.0px;top:716.3px;font-size:28px;color:#1d2735;transform:scaleX(1.0498);transform-origin:0 0;">Visualization</div>
<div class="b" style="left:655px;top:764px;width:113px;height:4px;background:#2463b7;"></div>
<div class="t" style="left:663.5px;top:785.3px;font-size:28px;color:#222e3e;transform:scaleX(1.0431);transform-origin:0 0;"><span style="font-weight:700;">5,784</span><span style="-webkit-text-stroke:.6px;"> of </span><span style="font-weight:700;">5,784</span><span style="-webkit-text-stroke:.6px;"> results in </span><span style="font-weight:700;">3,163</span><span style="-webkit-text-stroke:.6px;"> ms</span></div>
<div class="m" style="left:716.0px;top:842.6px;font-size:23.6px;color:#263242;font-weight:700;">Time</div>
<div class="m" style="left:1304.7px;top:842.6px;font-size:23.6px;color:#263242;font-weight:700;">SpanID</div>
<div class="m" style="left:1690.5px;top:842.6px;font-size:23.6px;color:#263242;font-weight:700;">Status</div>
<div class="m" style="left:1851.0px;top:842.6px;font-size:23.6px;color:#263242;font-weight:700;">Status Code</div>
<div class="b" style="left:655px;top:986px;width:1300px;height:55.5px;background:#e6eff8;"></div>
<div class="b" style="left:715px;top:990px;width:443.5px;height:47.5px;background:#cfdff2;"></div>
<div class="t r" style="left:717.0px;top:887.3px;font-size:28px;color:#2463b7;transform:scaleX(1.0184);transform-origin:0 0;">Feb 5, 2026 @ 15:06:38.625+00:00</div>
<div class="t" style="left:1303.8px;top:890.2px;font-size:24px;color:#2463b7;font-weight:700;transform:scaleX(1.0115);transform-origin:0 0;">a6a1c431a1b5db3e</div>
<svg class="b" style="left:1535.8px;top:891.2px;" width="21" height="21" viewBox="0 0 20 20" fill="none"><path d="M8.4 3.6 H4 Q2.2 3.6 2.2 5.4 V16 Q2.2 17.8 4 17.8 H14.6 Q16.4 17.8 16.4 16 V11.6" stroke="#2463b7" stroke-width="1.7" stroke-linecap="round"/><path d="M8.4 11.6 L17.6 2.4 M11.6 2 H18 V8.4" stroke="#2463b7" stroke-width="1.7" stroke-linecap="round" stroke-linejoin="round"/></svg>
<div class="m" style="left:1690.5px;top:892.5px;font-size:23.4px;color:#2a3544;">0</div>
<div class="m" style="left:1851.0px;top:892.5px;font-size:23.4px;color:#2a3544;">200</div>
<div class="t r" style="left:717.0px;top:943.3px;font-size:28px;color:#2463b7;transform:scaleX(1.0195);transform-origin:0 0;">Feb 5, 2026 @ 15:06:36.599+00:00</div>
<div class="t" style="left:1303.8px;top:946.2px;font-size:24px;color:#2463b7;font-weight:700;transform:scaleX(1.0644);transform-origin:0 0;">5923d9be3d1f594a</div>
<svg class="b" style="left:1541.6px;top:947.2px;" width="21" height="21" viewBox="0 0 20 20" fill="none"><path d="M8.4 3.6 H4 Q2.2 3.6 2.2 5.4 V16 Q2.2 17.8 4 17.8 H14.6 Q16.4 17.8 16.4 16 V11.6" stroke="#2463b7" stroke-width="1.7" stroke-linecap="round"/><path d="M8.4 11.6 L17.6 2.4 M11.6 2 H18 V8.4" stroke="#2463b7" stroke-width="1.7" stroke-linecap="round" stroke-linejoin="round"/></svg>
<div class="m" style="left:1690.5px;top:948.5px;font-size:23.4px;color:#2a3544;">0</div>
<div class="m" style="left:1851.0px;top:948.5px;font-size:23.4px;color:#2a3544;">200</div>
<div class="t r" style="left:717.0px;top:999.3px;font-size:28px;color:#2463b7;transform:scaleX(0.9926);transform-origin:0 0;text-decoration:underline;text-decoration-thickness:2px;text-underline-offset:4px;">Feb 5, 2026 @ 15:06:37.611+00:00</div>
<div class="t" style="left:1303.8px;top:1002.2px;font-size:24px;color:#2463b7;font-weight:700;transform:scaleX(1.0144);transform-origin:0 0;">6d1adccb77c4bcd3</div>
<svg class="b" style="left:1539.1px;top:1003.2px;" width="21" height="21" viewBox="0 0 20 20" fill="none"><path d="M8.4 3.6 H4 Q2.2 3.6 2.2 5.4 V16 Q2.2 17.8 4 17.8 H14.6 Q16.4 17.8 16.4 16 V11.6" stroke="#2463b7" stroke-width="1.7" stroke-linecap="round"/><path d="M8.4 11.6 L17.6 2.4 M11.6 2 H18 V8.4" stroke="#2463b7" stroke-width="1.7" stroke-linecap="round" stroke-linejoin="round"/></svg>
<div class="m" style="left:1690.5px;top:1004.5px;font-size:23.4px;color:#2a3544;">0</div>
<div class="m" style="left:1852.0px;top:1004.5px;font-size:23.4px;color:#2a3544;">-</div>
<div class="t r" style="left:717.0px;top:1055.3px;font-size:28px;color:#2463b7;transform:scaleX(0.9926);transform-origin:0 0;">Feb 5, 2026 @ 15:06:37.611+00:00</div>
<div class="t" style="left:1303.8px;top:1058.2px;font-size:24px;color:#2463b7;font-weight:700;transform:scaleX(1.0321);transform-origin:0 0;">d16893186df19dda</div>
<svg class="b" style="left:1536.1px;top:1059.2px;" width="21" height="21" viewBox="0 0 20 20" fill="none"><path d="M8.4 3.6 H4 Q2.2 3.6 2.2 5.4 V16 Q2.2 17.8 4 17.8 H14.6 Q16.4 17.8 16.4 16 V11.6" stroke="#2463b7" stroke-width="1.7" stroke-linecap="round"/><path d="M8.4 11.6 L17.6 2.4 M11.6 2 H18 V8.4" stroke="#2463b7" stroke-width="1.7" stroke-linecap="round" stroke-linejoin="round"/></svg>
<div class="m" style="left:1690.5px;top:1060.5px;font-size:23.4px;color:#2a3544;">0</div>
<div class="m" style="left:1851.0px;top:1060.5px;font-size:23.4px;color:#2a3544;">200</div>
<div class="t r" style="left:717.0px;top:1111.3px;font-size:28px;color:#2463b7;transform:scaleX(0.9926);transform-origin:0 0;">Feb 5, 2026 @ 15:06:37.611+00:00</div>
<div class="t" style="left:1303.8px;top:1114.2px;font-size:24px;color:#2463b7;font-weight:700;transform:scaleX(1.1025);transform-origin:0 0;">ad470608c6265898</div>
<svg class="b" style="left:1552.7px;top:1115.2px;" width="21" height="21" viewBox="0 0 20 20" fill="none"><path d="M8.4 3.6 H4 Q2.2 3.6 2.2 5.4 V16 Q2.2 17.8 4 17.8 H14.6 Q16.4 17.8 16.4 16 V11.6" stroke="#2463b7" stroke-width="1.7" stroke-linecap="round"/><path d="M8.4 11.6 L17.6 2.4 M11.6 2 H18 V8.4" stroke="#2463b7" stroke-width="1.7" stroke-linecap="round" stroke-linejoin="round"/></svg>
<div class="m" style="left:1690.5px;top:1116.5px;font-size:23.4px;color:#2a3544;">0</div>
<div class="m" style="left:1851.0px;top:1116.5px;font-size:23.4px;color:#2a3544;">200</div>
<div class="t r" style="left:717.0px;top:1167.3px;font-size:28px;color:#2463b7;transform:scaleX(0.9926);transform-origin:0 0;">Feb 5, 2026 @ 15:06:37.611+00:00</div>
<div class="t" style="left:1303.8px;top:1170.2px;font-size:24px;color:#2463b7;font-weight:700;transform:scaleX(1.0455);transform-origin:0 0;">c7e9487ba4d7d3c7</div>
<svg class="b" style="left:1543.2px;top:1171.2px;" width="21" height="21" viewBox="0 0 20 20" fill="none"><path d="M8.4 3.6 H4 Q2.2 3.6 2.2 5.4 V16 Q2.2 17.8 4 17.8 H14.6 Q16.4 17.8 16.4 16 V11.6" stroke="#2463b7" stroke-width="1.7" stroke-linecap="round"/><path d="M8.4 11.6 L17.6 2.4 M11.6 2 H18 V8.4" stroke="#2463b7" stroke-width="1.7" stroke-linecap="round" stroke-linejoin="round"/></svg>
<div class="m" style="left:1690.5px;top:1172.5px;font-size:23.4px;color:#2a3544;">0</div>
<div class="m" style="left:1851.0px;top:1172.5px;font-size:23.4px;color:#2a3544;">200</div>
<div class="t r" style="left:717.0px;top:1223.3px;font-size:28px;color:#2463b7;transform:scaleX(1.0216);transform-origin:0 0;">Feb 5, 2026 @ 15:06:34.329+00:00</div>
<div class="t" style="left:1303.8px;top:1226.2px;font-size:24px;color:#2463b7;font-weight:700;transform:scaleX(1.0786);transform-origin:0 0;">1e0c03b3ef0b0e8c</div>
<svg class="b" style="left:1543.2px;top:1227.2px;" width="21" height="21" viewBox="0 0 20 20" fill="none"><path d="M8.4 3.6 H4 Q2.2 3.6 2.2 5.4 V16 Q2.2 17.8 4 17.8 H14.6 Q16.4 17.8 16.4 16 V11.6" stroke="#2463b7" stroke-width="1.7" stroke-linecap="round"/><path d="M8.4 11.6 L17.6 2.4 M11.6 2 H18 V8.4" stroke="#2463b7" stroke-width="1.7" stroke-linecap="round" stroke-linejoin="round"/></svg>
<div class="m" style="left:1690.5px;top:1228.5px;font-size:23.4px;color:#2a3544;">0</div>
<div class="m" style="left:1852.0px;top:1228.5px;font-size:23.4px;color:#2a3544;">-</div>
<div class="t r" style="left:717.0px;top:1279.3px;font-size:28px;color:#2463b7;transform:scaleX(1.0216);transform-origin:0 0;">Feb 5, 2026 @ 15:06:34.329+00:00</div>
<div class="t" style="left:1303.8px;top:1282.2px;font-size:24px;color:#2463b7;font-weight:700;transform:scaleX(1.0565);transform-origin:0 0;">a744a10b4bc73d84</div>
<svg class="b" style="left:1545.6px;top:1283.2px;" width="21" height="21" viewBox="0 0 20 20" fill="none"><path d="M8.4 3.6 H4 Q2.2 3.6 2.2 5.4 V16 Q2.2 17.8 4 17.8 H14.6 Q16.4 17.8 16.4 16 V11.6" stroke="#2463b7" stroke-width="1.7" stroke-linecap="round"/><path d="M8.4 11.6 L17.6 2.4 M11.6 2 H18 V8.4" stroke="#2463b7" stroke-width="1.7" stroke-linecap="round" stroke-linejoin="round"/></svg>
<div class="m" style="left:1690.5px;top:1284.5px;font-size:23.4px;color:#2a3544;">0</div>
<div class="m" style="left:1852.0px;top:1284.5px;font-size:23.4px;color:#2a3544;">-</div>
<div class="t r" style="left:717.0px;top:1335.3px;font-size:28px;color:#2463b7;transform:scaleX(1.0216);transform-origin:0 0;">Feb 5, 2026 @ 15:06:34.329+00:00</div>
<div class="t" style="left:1303.8px;top:1338.2px;font-size:24px;color:#2463b7;font-weight:700;transform:scaleX(1.0358);transform-origin:0 0;">bd6ac732cdb9d7c5</div>
<svg class="b" style="left:1543.8px;top:1339.2px;" width="21" height="21" viewBox="0 0 20 20" fill="none"><path d="M8.4 3.6 H4 Q2.2 3.6 2.2 5.4 V16 Q2.2 17.8 4 17.8 H14.6 Q16.4 17.8 16.4 16 V11.6" stroke="#2463b7" stroke-width="1.7" stroke-linecap="round"/><path d="M8.4 11.6 L17.6 2.4 M11.6 2 H18 V8.4" stroke="#2463b7" stroke-width="1.7" stroke-linecap="round" stroke-linejoin="round"/></svg>
<div class="m" style="left:1690.5px;top:1340.5px;font-size:23.4px;color:#2a3544;">0</div>
<div class="m" style="left:1852.0px;top:1340.5px;font-size:23.4px;color:#2a3544;">-</div>
<div class="t r" style="left:717.0px;top:1391.3px;font-size:28px;color:#2463b7;transform:scaleX(1.0216);transform-origin:0 0;">Feb 5, 2026 @ 15:06:34.329+00:00</div>
<div class="t" style="left:1303.8px;top:1394.2px;font-size:24px;color:#2463b7;font-weight:700;transform:scaleX(1.0463);transform-origin:0 0;">0e1c63ab4857bf71</div>
<svg class="b" style="left:1536.4px;top:1395.2px;" width="21" height="21" viewBox="0 0 20 20" fill="none"><path d="M8.4 3.6 H4 Q2.2 3.6 2.2 5.4 V16 Q2.2 17.8 4 17.8 H14.6 Q16.4 17.8 16.4 16 V11.6" stroke="#2463b7" stroke-width="1.7" stroke-linecap="round"/><path d="M8.4 11.6 L17.6 2.4 M11.6 2 H18 V8.4" stroke="#2463b7" stroke-width="1.7" stroke-linecap="round" stroke-linejoin="round"/></svg>
<div class="m" style="left:1690.5px;top:1396.5px;font-size:23.4px;color:#2a3544;">0</div>
<div class="m" style="left:1852.0px;top:1396.5px;font-size:23.4px;color:#2a3544;">-</div>
<div class="t r" style="left:717.0px;top:1447.3px;font-size:28px;color:#2463b7;transform:scaleX(1.0216);transform-origin:0 0;">Feb 5, 2026 @ 15:06:34.329+00:00</div>
<div class="t" style="left:1303.8px;top:1450.2px;font-size:24px;color:#2463b7;font-weight:700;transform:scaleX(1.0653);transform-origin:0 0;">754c4d7187f39f74</div>
<svg class="b" style="left:1533.3px;top:1451.2px;" width="21" height="21" viewBox="0 0 20 20" fill="none"><path d="M8.4 3.6 H4 Q2.2 3.6 2.2 5.4 V16 Q2.2 17.8 4 17.8 H14.6 Q16.4 17.8 16.4 16 V11.6" stroke="#2463b7" stroke-width="1.7" stroke-linecap="round"/><path d="M8.4 11.6 L17.6 2.4 M11.6 2 H18 V8.4" stroke="#2463b7" stroke-width="1.7" stroke-linecap="round" stroke-linejoin="round"/></svg>
<div class="m" style="left:1690.5px;top:1452.5px;font-size:23.4px;color:#2a3544;">0</div>
<div class="m" style="left:1852.0px;top:1452.5px;font-size:23.4px;color:#2a3544;">-</div>
<div class="t r" style="left:717.0px;top:1503.3px;font-size:28px;color:#2463b7;transform:scaleX(1.0033);transform-origin:0 0;">Feb 5, 2026 @ 15:06:37.610+00:00</div>
<div class="t" style="left:1303.8px;top:1506.2px;font-size:24px;color:#2463b7;font-weight:700;transform:scaleX(1.0486);transform-origin:0 0;">e69b066761d7087c</div>
<svg class="b" style="left:1542.5px;top:1507.2px;" width="21" height="21" viewBox="0 0 20 20" fill="none"><path d="M8.4 3.6 H4 Q2.2 3.6 2.2 5.4 V16 Q2.2 17.8 4 17.8 H14.6 Q16.4 17.8 16.4 16 V11.6" stroke="#2463b7" stroke-width="1.7" stroke-linecap="round"/><path d="M8.4 11.6 L17.6 2.4 M11.6 2 H18 V8.4" stroke="#2463b7" stroke-width="1.7" stroke-linecap="round" stroke-linejoin="round"/></svg>
<div class="m" style="left:1690.5px;top:1508.5px;font-size:23.4px;color:#2a3544;">0</div>
<div class="m" style="left:1851.0px;top:1508.5px;font-size:23.4px;color:#2a3544;">200</div>
<div class="t r" style="left:717.0px;top:1559.3px;font-size:28px;color:#2463b7;transform:scaleX(1.0240);transform-origin:0 0;">Feb 5, 2026 @ 15:06:36.598+00:00</div>
<div class="t" style="left:1303.8px;top:1562.2px;font-size:24px;color:#2463b7;font-weight:700;transform:scaleX(1.0383);transform-origin:0 0;">e6db9d78d1ba5aef</div>
<svg class="b" style="left:1538.8px;top:1563.2px;" width="21" height="21" viewBox="0 0 20 20" fill="none"><path d="M8.4 3.6 H4 Q2.2 3.6 2.2 5.4 V16 Q2.2 17.8 4 17.8 H14.6 Q16.4 17.8 16.4 16 V11.6" stroke="#2463b7" stroke-width="1.7" stroke-linecap="round"/><path d="M8.4 11.6 L17.6 2.4 M11.6 2 H18 V8.4" stroke="#2463b7" stroke-width="1.7" stroke-linecap="round" stroke-linejoin="round"/></svg>
<div class="m" style="left:1690.5px;top:1564.5px;font-size:23.4px;color:#2a3544;">0</div>
<div class="m" style="left:1852.0px;top:1564.5px;font-size:23.4px;color:#2a3544;">-</div>
<div class="t r" style="left:717.0px;top:1615.3px;font-size:28px;color:#2463b7;transform:scaleX(1.0033);transform-origin:0 0;">Feb 5, 2026 @ 15:06:37.610+00:00</div>
<div class="t" style="left:1303.8px;top:1618.2px;font-size:24px;color:#2463b7;font-weight:700;transform:scaleX(1.0542);transform-origin:0 0;">883dfc1e1d8efbe8</div>
<svg class="b" style="left:1533.8px;top:1619.2px;" width="21" height="21" viewBox="0 0 20 20" fill="none"><path d="M8.4 3.6 H4 Q2.2 3.6 2.2 5.4 V16 Q2.2 17.8 4 17.8 H14.6 Q16.4 17.8 16.4 16 V11.6" stroke="#2463b7" stroke-width="1.7" stroke-linecap="round"/><path d="M8.4 11.6 L17.6 2.4 M11.6 2 H18 V8.4" stroke="#2463b7" stroke-width="1.7" stroke-linecap="round" stroke-linejoin="round"/></svg>
<div class="m" style="left:1690.5px;top:1620.5px;font-size:23.4px;color:#2a3544;">0</div>
<div class="m" style="left:1851.0px;top:1620.5px;font-size:23.4px;color:#2a3544;">200</div>
<div class="t r" style="left:717.0px;top:1671.3px;font-size:28px;color:#2463b7;transform:scaleX(1.0033);transform-origin:0 0;">Feb 5, 2026 @ 15:06:37.610+00:00</div>
<div class="t" style="left:1303.8px;top:1674.2px;font-size:24px;color:#2463b7;font-weight:700;transform:scaleX(1.0455);transform-origin:0 0;">6c4134edb93b79c7</div>
<svg class="b" style="left:1543.2px;top:1675.2px;" width="21" height="21" viewBox="0 0 20 20" fill="none"><path d="M8.4 3.6 H4 Q2.2 3.6 2.2 5.4 V16 Q2.2 17.8 4 17.8 H14.6 Q16.4 17.8 16.4 16 V11.6" stroke="#2463b7" stroke-width="1.7" stroke-linecap="round"/><path d="M8.4 11.6 L17.6 2.4 M11.6 2 H18 V8.4" stroke="#2463b7" stroke-width="1.7" stroke-linecap="round" stroke-linejoin="round"/></svg>
<div class="m" style="left:1690.5px;top:1676.5px;font-size:23.4px;color:#2a3544;">0</div>
<div class="m" style="left:1851.0px;top:1676.5px;font-size:23.4px;color:#2a3544;">200</div>
<div class="t r" style="left:717.0px;top:1727.3px;font-size:28px;color:#2463b7;transform:scaleX(1.0240);transform-origin:0 0;">Feb 5, 2026 @ 15:06:36.598+00:00</div>
<div class="t" style="left:1303.8px;top:1730.2px;font-size:24px;color:#2463b7;font-weight:700;transform:scaleX(1.0686);transform-origin:0 0;">246bd42fa4190aba</div>
<svg class="b" style="left:1542.5px;top:1731.2px;" width="21" height="21" viewBox="0 0 20 20" fill="none"><path d="M8.4 3.6 H4 Q2.2 3.6 2.2 5.4 V16 Q2.2 17.8 4 17.8 H14.6 Q16.4 17.8 16.4 16 V11.6" stroke="#2463b7" stroke-width="1.7" stroke-linecap="round"/><path d="M8.4 11.6 L17.6 2.4 M11.6 2 H18 V8.4" stroke="#2463b7" stroke-width="1.7" stroke-linecap="round" stroke-linejoin="round"/></svg>
<div class="m" style="left:1690.5px;top:1732.5px;font-size:23.4px;color:#2a3544;">0</div>
<div class="m" style="left:1852.0px;top:1732.5px;font-size:23.4px;color:#2a3544;">-</div>
<div class="t r" style="left:717.0px;top:1783.3px;font-size:28px;color:#2463b7;transform:scaleX(1.0128);transform-origin:0 0;">Feb 5, 2026 @ 15:06:37.602+00:00</div>
<div class="t" style="left:1303.8px;top:1786.2px;font-size:24px;color:#2463b7;font-weight:700;transform:scaleX(1.0166);transform-origin:0 0;">76ac6e1f245e71b1</div>
<svg class="b" style="left:1528.8px;top:1787.2px;" width="21" height="21" viewBox="0 0 20 20" fill="none"><path d="M8.4 3.6 H4 Q2.2 3.6 2.2 5.4 V16 Q2.2 17.8 4 17.8 H14.6 Q16.4 17.8 16.4 16 V11.6" stroke="#2463b7" stroke-width="1.7" stroke-linecap="round"/><path d="M8.4 11.6 L17.6 2.4 M11.6 2 H18 V8.4" stroke="#2463b7" stroke-width="1.7" stroke-linecap="round" stroke-linejoin="round"/></svg>
<div class="m" style="left:1690.5px;top:1788.5px;font-size:23.4px;color:#2a3544;">0</div>
<div class="m" style="left:1852.0px;top:1788.5px;font-size:23.4px;color:#2a3544;">-</div>
<div class="t r" style="left:717.0px;top:1839.3px;font-size:28px;color:#2463b7;transform:scaleX(1.0116);transform-origin:0 0;">Feb 5, 2026 @ 15:06:37.599+00:00</div>
<div class="t" style="left:1303.8px;top:1842.2px;font-size:24px;color:#2463b7;font-weight:700;transform:scaleX(1.0602);transform-origin:0 0;">0256173dce5e6b35</div>
<svg class="b" style="left:1545px;top:1843.2px;" width="21" height="21" viewBox="0 0 20 20" fill="none"><path d="M8.4 3.6 H4 Q2.2 3.6 2.2 5.4 V16 Q2.2 17.8 4 17.8 H14.6 Q16.4 17.8 16.4 16 V11.6" stroke="#2463b7" stroke-width="1.7" stroke-linecap="round"/><path d="M8.4 11.6 L17.6 2.4 M11.6 2 H18 V8.4" stroke="#2463b7" stroke-width="1.7" stroke-linecap="round" stroke-linejoin="round"/></svg>
<div class="m" style="left:1690.5px;top:1844.5px;font-size:23.4px;color:#2a3544;">0</div>
<div class="m" style="left:1852.0px;top:1844.5px;font-size:23.4px;color:#2a3544;">-</div>
<div class="t r" style="left:717.0px;top:1895.3px;font-size:28px;color:#2463b7;transform:scaleX(1.0116);transform-origin:0 0;">Feb 5, 2026 @ 15:06:37.595+00:00</div>
<div class="t" style="left:1303.8px;top:1898.2px;font-size:24px;color:#2463b7;font-weight:700;transform:scaleX(1.0564);transform-origin:0 0;">723531d4f9dd66d7</div>
<svg class="b" style="left:1541.3px;top:1899.2px;" width="21" height="21" viewBox="0 0 20 20" fill="none"><path d="M8.4 3.6 H4 Q2.2 3.6 2.2 5.4 V16 Q2.2 17.8 4 17.8 H14.6 Q16.4 17.8 16.4 16 V11.6" stroke="#2463b7" stroke-width="1.7" stroke-linecap="round"/><path d="M8.4 11.6 L17.6 2.4 M11.6 2 H18 V8.4" stroke="#2463b7" stroke-width="1.7" stroke-linecap="round" stroke-linejoin="round"/></svg>
<div class="m" style="left:1690.5px;top:1900.5px;font-size:23.4px;color:#2a3544;">0</div>
<div class="m" style="left:1852.0px;top:1900.5px;font-size:23.4px;color:#2a3544;">-</div>
<svg class="b" style="left:1189.3px;top:995.7px;" width="45" height="45" viewBox="0 0 45 45" fill="none"><path d="M15.00 27.00 A12.00 12.00 0 1 1 23.34 23.63 L32.65 32.65" stroke="#2463b7" stroke-width="1.9" stroke-linecap="round" stroke-linejoin="miter"/><path d="M9.6 15.0 H20.4" stroke="#2463b7" stroke-width="1.9" stroke-linecap="round"/><path d="M15.0 9.6 V20.4" stroke="#2463b7" stroke-width="1.9" stroke-linecap="round"/></svg>
<svg class="b" style="left:1236.6px;top:995.7px;" width="45" height="45" viewBox="0 0 45 45" fill="none"><path d="M15.00 27.00 A12.00 12.00 0 1 1 23.34 23.63 L32.65 32.65" stroke="#2463b7" stroke-width="1.9" stroke-linecap="round" stroke-linejoin="miter"/><path d="M9.6 15.0 H20.4" stroke="#2463b7" stroke-width="1.9" stroke-linecap="round"/></svg>
<div class="b" style="left:1921px;top:2px;width:1917px;height:1912px;background:#fdfeff;border-left:1px solid #cfd4de;box-shadow:0 0 70px 0 rgba(50,60,80,.22),-3px 0 10px 0 rgba(50,60,80,.10);"></div>
<div class="b" style="left:1920px;top:0px;width:1918px;height:2px;background:#3a3a3a;"></div>
<div class="t r" style="left:1970.0px;top:54.0px;font-size:47.5px;color:#1a1c21;transform:scaleX(1.0950);transform-origin:0 0;-webkit-text-stroke:.8px;">load-generator: user_get_recommendations</div>
<div class="b" style="left:1970px;top:124px;width:703.5px;height:45.5px;border:2px solid #d9dce2;border-radius:5px;box-sizing:border-box;"></div>
<div class="t r" style="left:1988.6px;top:133.0px;font-size:26px;color:#2a3340;transform:scaleX(1.1396);transform-origin:0 0;">Trace ID: e0354ac725f9892cb30a3838aff8b3ca</div>
<svg class="b" style="left:2632px;top:134px;" width="24" height="26" viewBox="0 0 24 26" fill="none"><rect x="2" y="5.6" width="14.6" height="18.4" rx="2" stroke="#222c3a" stroke-width="1.8"/><path d="M6.4 5 V4 Q6.4 2 8.4 2 H17 L21.4 6.4 V18.6 Q21.4 20.6 19.4 20.6 H17.4" stroke="#222c3a" stroke-width="1.8" stroke-linejoin="round"/></svg>
<svg class="b" style="left:3788px;top:30px;" width="24" height="24" viewBox="0 0 24 24" fill="none"><path d="M3 3 L21 21 M21 3 L3 21" stroke="#2b3645" stroke-width="2.3" stroke-linecap="round"/></svg>
<div class="b" style="left:3341.4px;top:77.8px;width:242.6px;height:64px;border:2px solid #2463b7;border-radius:9px;box-sizing:border-box;"></div>
<div class="t r" style="left:3367.8px;top:94.7px;font-size:28px;color:#2463b7;transform:scaleX(1.0355);transform-origin:0 0;">View raw trace</div>
<div class="t" style="left:3600.0px;top:81.9px;font-size:28px;color:#2463b7;font-weight:700;transform:scaleX(0.9685);transform-origin:0 0;">Open full</div>
<div class="t" style="left:3600.0px;top:109.7px;font-size:28px;color:#2463b7;font-weight:700;transform:scaleX(0.9946);transform-origin:0 0;">page</div>
<svg class="b" style="left:3677.5px;top:115px;" width="20.5" height="20.5" viewBox="0 0 20 20" fill="none"><path d="M8.4 3.6 H4 Q2.2 3.6 2.2 5.4 V16 Q2.2 17.8 4 17.8 H14.6 Q16.4 17.8 16.4 16 V11.6" stroke="#2463b7" stroke-width="1.7" stroke-linecap="round"/><path d="M8.4 11.6 L17.6 2.4 M11.6 2 H18 V8.4" stroke="#2463b7" stroke-width="1.7" stroke-linecap="round" stroke-linejoin="round"/></svg>
<div class="b" style="left:3824px;top:176px;width:12px;height:1658px;background:#a9afba;border-radius:6px;"></div>
<div class="t r" style="left:2006.5px;top:248.1px;font-size:28px;color:#2463b7;transform:scaleX(1.0404);transform-origin:0 0;">Timeline</div>
<div class="b" style="left:2179.7px;top:244.8px;width:65px;height:40.2px;background:#d3dae6;border-radius:5px;"></div>
<div class="t" style="left:2198.0px;top:251.6px;font-size:25.5px;color:#0b0d12;font-weight:700;">25</div>
<div class="t r" style="left:2252.0px;top:248.1px;font-size:28px;color:#2a3544;transform:scaleX(1.0429);transform-origin:0 0;">Span list</div>
<div class="b" style="left:2429px;top:244.8px;width:50.6px;height:40.2px;background:#d3dae6;border-radius:5px;"></div>
<div class="t" style="left:2447.2px;top:251.6px;font-size:25.5px;color:#0b0d12;font-weight:700;">8</div>
<div class="t r" style="left:2487.7px;top:248.1px;font-size:28px;color:#2a3544;transform:scaleX(1.0189);transform-origin:0 0;">Related logs</div>
<div class="b" style="left:1974px;top:306.6px;width:1792px;height:2px;background:#d9dde5;"></div>
<div class="b" style="left:1974px;top:305px;width:174px;height:4.4px;background:#2463b7;"></div>
<div class="b" style="left:1974px;top:313.4px;width:1791.5px;height:642px;border:2px solid #d5d7dd;border-radius:9px;box-sizing:border-box;background:#fdfeff;box-shadow:0 3px 5px -1px rgba(60,70,90,.14);"></div>
<svg class="b" style="left:2036px;top:365px;" width="28" height="28" viewBox="0 0 28 28" fill="none"><rect x="2.2" y="2.2" width="23.6" height="23.6" rx="3" stroke="#2b3645" stroke-width="1.6"/><path d="M7.4 11.6 V7.4 H11.6 M16.4 7.4 H20.6 V11.6 M20.6 16.4 V20.6 H16.4 M11.6 20.6 H7.4 V16.4" stroke="#2b3645" stroke-width="1.6"/></svg>
<div class="t r" style="left:2078.7px;top:365.3px;font-size:28px;color:#2b3645;transform:scaleX(1.0238);transform-origin:0 0;">Full screen</div>
<svg class="b" style="left:2259px;top:367px;" width="26" height="26" viewBox="0 0 26 26" fill="none"><path d="M3.4 22.6 L22.6 3.4 M15.4 2.8 H23.2 V10.6 M2.8 15.4 V23.2 H10.6" stroke="#2b3645" stroke-width="1.5" stroke-linecap="round" stroke-linejoin="round"/></svg>
<div class="t r" style="left:2301.0px;top:365.3px;font-size:28px;color:#2b3645;transform:scaleX(1.0057);transform-origin:0 0;">Expand all</div>
<svg class="b" style="left:2474px;top:367px;" width="26" height="26" viewBox="0 0 26 26" fill="none"><path d="M14.2 11.8 L23 3 M14.2 5.4 V11.8 H20.6 M11.8 14.2 L3 23 M5.4 14.2 H11.8 V20.6" stroke="#2b3645" stroke-width="1.5" stroke-linecap="round" stroke-linejoin="round"/></svg>
<div class="t r" style="left:2514.6px;top:365.3px;font-size:28px;color:#2b3645;transform:scaleX(0.9935);transform-origin:0 0;">Collapse all</div>
<svg class="b" style="left:2698px;top:365px;" width="28" height="28" viewBox="0 0 28 28" fill="none"><rect x="2.2" y="2.2" width="23.6" height="23.6" rx="3" stroke="#2b3645" stroke-width="1.6"/><path d="M2.2 8.4 H25.8 M6 13.6 H9 M12 13.6 H22 M6 19.4 H9 M12 19.4 H22" stroke="#2b3645" stroke-width="1.6"/></svg>
<div class="t r" style="left:2741.2px;top:365.3px;font-size:28px;color:#2b3645;transform:scaleX(1.0411);transform-origin:0 0;">Density</div>
<svg class="b" style="left:3187px;top:365px;" width="26" height="28" viewBox="0 0 26 28" fill="none"><path d="M3 3.6 H23 L15.6 13.4 V21 L10.6 24.6 V13.4 Z" stroke="#2463b7" stroke-width="1.7" stroke-linejoin="round"/></svg>
<div class="t r" style="left:3229.0px;top:365.1px;font-size:28px;color:#2463b7;transform:scaleX(1.0519);transform-origin:0 0;">Filter by status</div>
<svg class="b" style="left:3455px;top:365px;" width="28" height="28" viewBox="0 0 28 28" fill="none"><path d="M5 24 Q2.4 24 2.4 21.4 V5 Q2.4 2.4 5 2.4 H19.4 Q22 2.4 22 5 V7.6" stroke="#2463b7" stroke-width="1.6"/><path d="M6 6 H18.6 M6 9.2 H11 M6 12.4 H8.4 M6 15.6 H7.6 M6 18.8 H7.6" stroke="#2463b7" stroke-width="1.5" stroke-dasharray="1.6 1.6"/><circle cx="16.2" cy="16" r="6.6" stroke="#2463b7" stroke-width="1.6"/><path d="M21 21 L25.6 25.6" stroke="#2463b7" stroke-width="1.6" stroke-linecap="round"/></svg>
<div class="t r" style="left:3498.0px;top:365.1px;font-size:28px;color:#2463b7;transform:scaleX(1.0279);transform-origin:0 0;">Service legend</div>
<div class="b" style="left:2008px;top:411px;width:1724px;height:2px;background:#dcdfe6;"></div>
<div class="t" style="left:2016.0px;top:427.0px;font-size:24px;color:#222e3e;font-weight:700;transform:scaleX(0.9885);transform-origin:0 0;">Span</div>
<div class="t" style="left:2622.3px;top:427.0px;font-size:24px;color:#222e3e;font-weight:700;transform:scaleX(0.9987);transform-origin:0 0;">Timeline</div>
<div class="t" style="left:3518.5px;top:427.0px;font-size:24px;color:#222e3e;font-weight:700;transform:scaleX(1.0115);transform-origin:0 0;">Duration</div>
<div class="b" style="left:3716px;top:419.6px;width:12px;height:98px;background:#a9afba;border-radius:6px;"></div>
<div class="t" style="left:2636.0px;top:478.0px;font-size:23px;color:#a4a9b3;font-weight:700;transform:scaleX(1.0753);transform-origin:0 0;">0ms</div>
<div class="t" style="left:2815.0px;top:478.0px;font-size:23px;color:#a4a9b3;font-weight:700;transform:scaleX(1.0862);transform-origin:0 0;">5ms</div>
<div class="t" style="left:3012.3px;top:478.0px;font-size:23px;color:#a4a9b3;font-weight:700;transform:scaleX(1.0761);transform-origin:0 0;">10ms</div>
<div class="t" style="left:3216.7px;top:478.0px;font-size:23px;color:#a4a9b3;font-weight:700;transform:scaleX(1.0778);transform-origin:0 0;">15ms</div>
<div class="t" style="left:3388.6px;top:478.0px;font-size:23px;color:#a4a9b3;font-weight:700;transform:scaleX(1.0880);transform-origin:0 0;">20ms</div>
<div class="b" style="left:2634.3px;top:504.6px;width:3.4px;height:12.4px;background:#a5aab4;"></div>
<div class="b" style="left:2838.3px;top:504.6px;width:3.4px;height:12.4px;background:#a5aab4;"></div>
<div class="b" style="left:3042.3px;top:504.6px;width:3.4px;height:12.4px;background:#a5aab4;"></div>
<div class="b" style="left:3246.7px;top:504.6px;width:3.4px;height:12.4px;background:#a5aab4;"></div>
<div class="b" style="left:3450.6px;top:504.6px;width:3.4px;height:12.4px;background:#a5aab4;"></div>
<div class="b" style="left:2008px;top:525.2px;width:1702px;height:3.8px;background:#1f2a3a;"></div>
<div class="b" style="left:2008px;top:529px;width:1702px;height:66px;background:#e6eff8;"></div>
<div class="b" style="left:2008px;top:595px;width:604.5px;height:2px;background:#dfe2e8;"></div>
<div class="b" style="left:2613.5px;top:595px;width:895px;height:2px;background:#dfe2e8;"></div>
<div class="b" style="left:3509.5px;top:595px;width:200.5px;height:2px;background:#dfe2e8;"></div>
<svg class="b" style="left:2021px;top:555.1px;" width="26" height="15" viewBox="0 0 26 15" fill="none"><path d="M2 2 L13 13 L24 2" stroke="#1f2a3a" stroke-width="2.4" stroke-linecap="round" stroke-linejoin="round"/></svg>
<div class="t" style="left:2060.0px;top:549.6px;font-size:25px;color:#222e3e;font-weight:700;transform:scaleX(1.0010);transform-origin:0 0;">load-generator</div>
<div class="t r" style="left:2242.2px;top:549.6px;font-size:25px;color:#2a3544;transform:scaleX(1.0461);transform-origin:0 0;">user_get_recommendations</div>
<div class="b" style="left:2639.7px;top:545px;width:842.3px;height:34.5px;background:#c56a86;"></div>
<div class="t r" style="left:3518.5px;top:549.6px;font-size:25px;color:#222e3e;transform:scaleX(0.9210);transform-origin:0 0;">21 ms</div>
<div class="b" style="left:2008px;top:663px;width:604.5px;height:2px;background:#dfe2e8;"></div>
<div class="b" style="left:2613.5px;top:663px;width:895px;height:2px;background:#dfe2e8;"></div>
<div class="b" style="left:3509.5px;top:663px;width:200.5px;height:2px;background:#dfe2e8;"></div>
<svg class="b" style="left:2061.1px;top:623.1px;" width="26" height="15" viewBox="0 0 26 15" fill="none"><path d="M2 2 L13 13 L24 2" stroke="#1f2a3a" stroke-width="2.4" stroke-linecap="round" stroke-linejoin="round"/></svg>
<div class="t" style="left:2100.1px;top:617.6px;font-size:25px;color:#222e3e;font-weight:700;transform:scaleX(1.0010);transform-origin:0 0;">load-generator</div>
<div class="t r" style="left:2282.3px;top:617.6px;font-size:25px;color:#2a3544;transform:scaleX(0.8562);transform-origin:0 0;">GET</div>
<div class="b" style="left:2656.7px;top:613px;width:807.8px;height:34.5px;background:#c56a86;"></div>
<div class="t r" style="left:3518.5px;top:617.6px;font-size:25px;color:#222e3e;transform:scaleX(0.9915);transform-origin:0 0;">20 ms</div>
<div class="b" style="left:2008px;top:731px;width:604.5px;height:2px;background:#dfe2e8;"></div>
<div class="b" style="left:2613.5px;top:731px;width:895px;height:2px;background:#dfe2e8;"></div>
<div class="b" style="left:3509.5px;top:731px;width:200.5px;height:2px;background:#dfe2e8;"></div>
<svg class="b" style="left:2101.2px;top:691.1px;" width="26" height="15" viewBox="0 0 26 15" fill="none"><path d="M2 2 L13 13 L24 2" stroke="#1f2a3a" stroke-width="2.4" stroke-linecap="round" stroke-linejoin="round"/></svg>
<div class="t" style="left:2140.2px;top:685.6px;font-size:25px;color:#222e3e;font-weight:700;transform:scaleX(1.0069);transform-origin:0 0;">frontend-proxy</div>
<div class="t r" style="left:2326.2px;top:685.6px;font-size:25px;color:#2a3544;transform:scaleX(1.0001);transform-origin:0 0;">ingress</div>
<div class="b" style="left:2675px;top:681px;width:807px;height:34.5px;background:#6b93c2;"></div>
<div class="t r" style="left:3518.5px;top:685.6px;font-size:25px;color:#222e3e;transform:scaleX(0.9915);transform-origin:0 0;">20 ms</div>
<div class="b" style="left:2008px;top:799px;width:604.5px;height:2px;background:#dfe2e8;"></div>
<div class="b" style="left:2613.5px;top:799px;width:895px;height:2px;background:#dfe2e8;"></div>
<div class="b" style="left:3509.5px;top:799px;width:200.5px;height:2px;background:#dfe2e8;"></div>
<svg class="b" style="left:2141.3px;top:759.1px;" width="26" height="15" viewBox="0 0 26 15" fill="none"><path d="M2 2 L13 13 L24 2" stroke="#1f2a3a" stroke-width="2.4" stroke-linecap="round" stroke-linejoin="round"/></svg>
<div class="t" style="left:2180.3px;top:753.6px;font-size:25px;color:#222e3e;font-weight:700;transform:scaleX(1.0069);transform-origin:0 0;">frontend-proxy</div>
<div class="t r" style="left:2366.3px;top:753.6px;font-size:25px;color:#2a3544;transform:scaleX(0.9820);transform-origin:0 0;">router frontend egr…</div>
<div class="b" style="left:2675px;top:749px;width:807px;height:34.5px;background:#6b93c2;"></div>
<div class="t r" style="left:3518.5px;top:753.6px;font-size:25px;color:#222e3e;transform:scaleX(0.9915);transform-origin:0 0;">20 ms</div>
<div class="b" style="left:2008px;top:867px;width:604.5px;height:2px;background:#dfe2e8;"></div>
<div class="b" style="left:2613.5px;top:867px;width:895px;height:2px;background:#dfe2e8;"></div>
<div class="b" style="left:3509.5px;top:867px;width:200.5px;height:2px;background:#dfe2e8;"></div>
<svg class="b" style="left:2181.4px;top:827.1px;" width="26" height="15" viewBox="0 0 26 15" fill="none"><path d="M2 2 L13 13 L24 2" stroke="#1f2a3a" stroke-width="2.4" stroke-linecap="round" stroke-linejoin="round"/></svg>
<div class="t" style="left:2220.4px;top:821.6px;font-size:25px;color:#222e3e;font-weight:700;transform:scaleX(0.9964);transform-origin:0 0;">frontend</div>
<div class="t r" style="left:2328.4px;top:821.6px;font-size:25px;color:#2a3544;transform:scaleX(0.8562);transform-origin:0 0;">GET</div>
<div class="b" style="left:2683px;top:817px;width:763.6px;height:34.5px;background:#6eb099;"></div>
<div class="t r" style="left:3518.5px;top:821.6px;font-size:25px;color:#222e3e;transform:scaleX(0.9404);transform-origin:0 0;">18.87 ms</div>
<svg class="b" style="left:2221.5px;top:895.1px;" width="26" height="15" viewBox="0 0 26 15" fill="none"><path d="M2 2 L13 13 L24 2" stroke="#1f2a3a" stroke-width="2.4" stroke-linecap="round" stroke-linejoin="round"/></svg>
<div class="t" style="left:2260.5px;top:889.6px;font-size:25px;color:#222e3e;font-weight:700;transform:scaleX(0.9964);transform-origin:0 0;">frontend</div>
<div class="t r" style="left:2368.5px;top:889.6px;font-size:25px;color:#2a3544;transform:scaleX(0.9559);transform-origin:0 0;">GET /api/recomme…</div>
<div class="b" style="left:2683px;top:885px;width:746.7px;height:34.5px;background:#6eb099;"></div>
<div class="t r" style="left:3518.5px;top:889.6px;font-size:25px;color:#222e3e;transform:scaleX(0.9618);transform-origin:0 0;">18.34 ms</div>
<div class="b" style="left:1974px;top:1131px;width:1791.5px;height:820px;border:2px solid #d5d7dd;border-radius:9px;box-sizing:border-box;background:#fdfeff;"></div>
<div class="b" style="left:2858px;top:1127px;width:24px;height:2px;background:#1f2a3a;"></div>
<div class="b" style="left:2858px;top:1133px;width:24px;height:2px;background:#1f2a3a;"></div>
<div class="t" style="left:2008.2px;top:1168.5px;font-size:36px;color:#1a1f2b;font-weight:700;transform:scaleX(1.0044);transform-origin:0 0;">Span details</div>
<div class="t r" style="left:2040.0px;top:1255.9px;font-size:28px;color:#2463b7;transform:scaleX(1.0284);transform-origin:0 0;">Overview</div>
<div class="t r" style="left:2224.4px;top:1255.9px;font-size:28px;color:#2a3544;transform:scaleX(1.0233);transform-origin:0 0;">Errors</div>
<div class="t r" style="left:2367.6px;top:1255.9px;font-size:28px;color:#2a3544;transform:scaleX(1.0129);transform-origin:0 0;">Logs</div>
<div class="t r" style="left:2494.0px;top:1255.9px;font-size:28px;color:#2a3544;transform:scaleX(1.0407);transform-origin:0 0;">Metadata</div>
<div class="t r" style="left:2680.7px;top:1255.9px;font-size:28px;color:#2a3544;transform:scaleX(1.0039);transform-origin:0 0;">Raw span</div>
<div class="b" style="left:2007.6px;top:1313.2px;width:1724.6px;height:2px;background:#d9dde5;"></div>
<div class="b" style="left:2007.6px;top:1311px;width:184.2px;height:4.4px;background:#2463b7;"></div>
<div class="t" style="left:2007.6px;top:1338.3px;font-size:28px;color:#222e3e;font-weight:700;transform:scaleX(1.0166);transform-origin:0 0;">Service identifier</div>
<div class="t r" style="left:2007.6px;top:1398.6px;font-size:28px;color:#2a3544;transform:scaleX(1.0919);transform-origin:0 0;">user_get_recommendations</div>
<svg class="b" style="left:2412px;top:1397px;" width="28" height="32" viewBox="0 0 28 32" fill="none"><path d="M6.2 3 H3 Q1 3 1 5 V27 Q1 29 3 29 H10.6" stroke="#1259b0" stroke-width="2" /><path d="M17.6 3 H21.4 Q23.4 3 23.4 5 V10.6" stroke="#1259b0" stroke-width="2"/><path d="M6.6 5.6 L7.6 1.8 Q7.9 1 8.8 1 H15.4 Q16.3 1 16.6 1.8 L17.6 5.6 Z" stroke="#1259b0" stroke-width="2" stroke-linejoin="round"/><rect x="10.8" y="10.8" width="16.2" height="20.2" rx="2.2" stroke="#1259b0" stroke-width="2"/><path d="M14.4 15.2 H23.4 M14.4 19.2 H23.4 M14.4 23.2 H23.4 M14.4 27.2 H23.4" stroke="#1259b0" stroke-width="1.9"/></svg>
<div class="t" style="left:2894.4px;top:1338.3px;font-size:28px;color:#222e3e;font-weight:700;transform:scaleX(0.9814);transform-origin:0 0;">Span ID</div>
<div class="t r" style="left:2894.4px;top:1398.6px;font-size:28px;color:#2a3544;transform:scaleX(1.0318);transform-origin:0 0;">6d1adccb77c4bcd3</div>
<svg class="b" style="left:3170px;top:1397px;" width="28" height="32" viewBox="0 0 28 32" fill="none"><path d="M6.2 3 H3 Q1 3 1 5 V27 Q1 29 3 29 H10.6" stroke="#1259b0" stroke-width="2" /><path d="M17.6 3 H21.4 Q23.4 3 23.4 5 V10.6" stroke="#1259b0" stroke-width="2"/><path d="M6.6 5.6 L7.6 1.8 Q7.9 1 8.8 1 H15.4 Q16.3 1 16.6 1.8 L17.6 5.6 Z" stroke="#1259b0" stroke-width="2" stroke-linejoin="round"/><rect x="10.8" y="10.8" width="16.2" height="20.2" rx="2.2" stroke="#1259b0" stroke-width="2"/><path d="M14.4 15.2 H23.4 M14.4 19.2 H23.4 M14.4 23.2 H23.4 M14.4 27.2 H23.4" stroke="#1259b0" stroke-width="1.9"/></svg>
<div class="t" style="left:2007.6px;top:1484.1px;font-size:28px;color:#222e3e;font-weight:700;transform:scaleX(1.0484);transform-origin:0 0;">Start time</div>
<div class="t r" style="left:2007.6px;top:1533.9px;font-size:28px;color:#2a3544;transform:scaleX(0.9905);transform-origin:0 0;">Feb 5 @ 23:06:37.590 (21ms)</div>
<div class="t" style="left:2894.4px;top:1484.1px;font-size:28px;color:#222e3e;font-weight:700;transform:scaleX(1.0170);transform-origin:0 0;">Span status</div>
<div class="b" style="left:2899.6px;top:1541.6px;width:12.4px;height:12.4px;background:#3a8a6d;border-radius:50%;"></div>
<div class="t r" style="left:2926.0px;top:1533.9px;font-size:28px;color:#2a3544;transform:scaleX(0.8899);transform-origin:0 0;">OK</div>
</div>
</body></html>
